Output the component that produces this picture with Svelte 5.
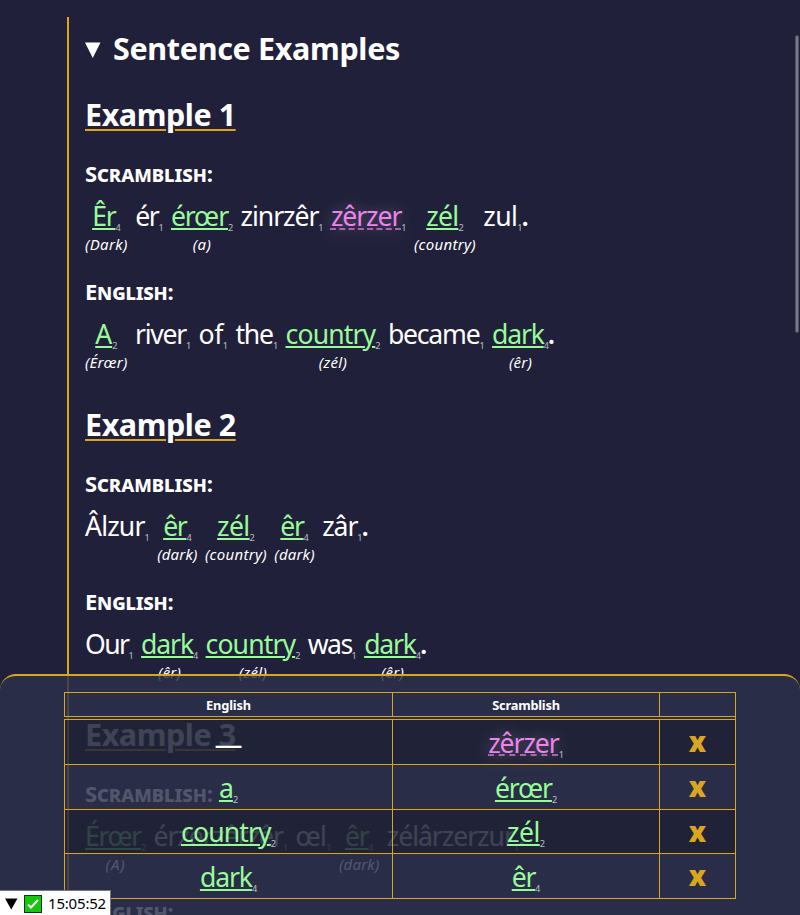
<script>
  // kind: plain | known (green, underlined) | active (pink, dashed)
  const w = (text, width, count, kind = 'plain', note = null, noteWidth = 0) => ({
    text, width, count, kind, note, noteWidth
  });

  const examples = [
    {
      title: 'Example 1',
      lines: [
        {
          label: 'Scramblish:', labelWidth: 128,
          words: [
            w('Êr', 23.3, 4, 'known', '(Dark)', 42.8),
            w('ér', 23.2, 1),
            w('érœr', 57, 2, 'known', '(a)', 18.5),
            w('zinrzêr', 77.8, 1),
            w('zêrzer', 70.4, 1, 'active'),
            w('zél', 32.2, 2, 'known', '(country)', 62),
            w('zul', 34, 1)
          ]
        },
        {
          label: 'English:', labelWidth: 88.5,
          words: [
            w('A', 17, 2, 'known', '(Érœr)', 42.6),
            w('river', 51, 1),
            w('of', 24.3, 1),
            w('the', 37.5, 1),
            w('country', 89.8, 2, 'known', '(zél)', 28.5),
            w('became', 91.6, 1),
            w('dark', 51.6, 4, 'known', '(êr)', 23)
          ]
        }
      ]
    },
    {
      title: 'Example 2',
      lines: [
        {
          label: 'Scramblish:', labelWidth: 128,
          words: [
            w('Âlzur', 59.6, 1),
            w('êr', 23.2, 4, 'known', '(dark)', 40.4),
            w('zél', 32.5, 2, 'known', '(country)', 62),
            w('êr', 23.2, 4, 'known', '(dark)', 40.4),
            w('zâr', 35.2, 1)
          ]
        },
        {
          label: 'English:', labelWidth: 88.5,
          words: [
            w('Our', 43.5, 1),
            w('dark', 51.9, 4, 'known', '(êr)', 23),
            w('country', 89.6, 2, 'known', '(zél)', 28.5),
            w('was', 43.8, 1),
            w('dark', 51.6, 4, 'known', '(êr)', 23)
          ]
        }
      ]
    },
    {
      title: 'Example 3',
      lines: [
        {
          label: 'Scramblish:', labelWidth: 128,
          words: [
            w('Érœr', 56, 2, 'known', '(A)', 20),
            w('érzerzêrzêr', 129.3, 1),
            w('œl', 31, 1),
            w('êr', 23.2, 4, 'known', '(dark)', 40.4),
            w('zélârzerzur', 127, 1)
          ]
        },
        { label: 'English:', labelWidth: 88.5, words: [] }
      ]
    }
  ];

  const glossary = [
    { english: null, scramblish: w('zêrzer', 70.5, 1, 'active') },
    { english: w('a', 14, 2, 'known'), scramblish: w('érœr', 57, 2, 'known') },
    { english: w('country', 89.7, 2, 'known'), scramblish: w('zél', 32.7, 2, 'known') },
    { english: w('dark', 52, 4, 'known'), scramblish: w('êr', 23.4, 4, 'known') }
  ];

  // Tracks the text so that it fills the given width.
  function fit(node, width) {
    node.style.letterSpacing = '0px';
    const natural = node.getBoundingClientRect().width;
    node.style.letterSpacing = `${(width - natural) / [...node.textContent.trim()].length}px`;
  }
</script>

{#snippet word(item)}
  <span class="word"><span class={item.kind} use:fit={item.width}>{item.text}</span><span class="count">{item.count}</span></span>
{/snippet}

<div class="page">
  <main>
    <h2>
      <svg width="16" height="16" viewBox="0 0 16 16"><path d="M0 0.5H15.5L7.75 16Z" fill="#fff" /></svg>
      <span use:fit={287}>Sentence Examples</span>
    </h2>
    {#each examples as example}
      <section>
        <h3><span use:fit={150.7}>{example.title}</span></h3>
        {#each example.lines as line}
          <h4><span use:fit={line.labelWidth}>{line.label}</span></h4>
          <div class="sentence">
            {#each line.words as item}
              <span class="cell">
                {@render word(item)}
                {#if item.note}<em><span use:fit={item.noteWidth}>{item.note}</span></em>{/if}
              </span>
            {/each}
            {#if line.words.length}<span class="stop">.</span>{/if}
          </div>
        {/each}
      </section>
    {/each}
  </main>

  <div class="scrollbar"></div>

  <aside>
    <div class="table">
      <div class="row head">
        <div><span use:fit={45}>English</span></div>
        <div><span use:fit={67.5}>Scramblish</span></div>
        <div></div>
      </div>
      {#each glossary as entry}
        <div class="row">
          <div>
            {#if entry.english}{@render word(entry.english)}{:else}<span class="dash">—</span>{/if}
          </div>
          <div>{@render word(entry.scramblish)}</div>
          <div><button>x</button></div>
        </div>
      {/each}
    </div>
  </aside>

  <div class="status">
    <svg class="arrow" width="13" height="12" viewBox="0 0 13 12"><path d="M0 0.5H12.5L6.25 11.5Z" /></svg>
    <svg class="check" width="18" height="18" viewBox="0 0 18 18">
      <rect x="0.5" y="0.5" width="17" height="17" fill="#16c60c" stroke="#0c3b1c" />
      <path d="M4 9.5L7 12.5L14 5" fill="none" stroke="#fff" stroke-width="2" />
    </svg>
    <span use:fit={58}>15:05:52</span>
  </div>
</div>

<style>
  :global(body) {
    margin: 0;
    overflow: hidden;
    background: #21203a;
  }
  .page {
    position: relative;
    box-sizing: border-box;
    width: 800px;
    height: 915px;
    padding: 17px 0 0 67px;
    overflow: hidden;
    background: #21203a;
    color: #fff;
    font-family: 'Noto Sans', 'Open Sans', sans-serif;
  }
  main {
    height: 960px;
    padding: 9px 0 0 16px;
    border-left: 2px solid #daa520;
  }
  h2, h3, h4 {
    margin: 0;
    white-space: nowrap;
  }
  h2 {
    display: flex;
    align-items: center;
    gap: 12px;
    height: 44px;
    margin-bottom: 24px;
    font-size: 30.5px;
    line-height: 44px;
  }
  h2 svg {
    margin-top: 3px;
  }
  section {
    height: 310px;
  }
  h3 {
    height: 40px;
    margin-bottom: 24px;
    font-size: 30.5px;
    line-height: 40px;
    text-decoration: underline 2px #daa520;
    text-underline-offset: 3px;
  }
  h4 {
    height: 30px;
    margin-bottom: 10px;
    font-size: 22px;
    line-height: 30px;
    font-variant: small-caps;
  }
  .sentence {
    display: flex;
    align-items: flex-start;
    height: 56px;
    margin-bottom: 22px;
  }
  .cell {
    display: flex;
    flex-direction: column;
    align-items: center;
    margin-left: 7.4px;
  }
  .cell:first-child {
    margin-left: 0;
  }
  .word, .stop, .dash {
    font-size: 26.6px;
    line-height: 36px;
    white-space: nowrap;
  }
  .stop {
    margin-left: -1px;
    font-weight: 600;
  }
  .known {
    color: #98fb98;
    text-decoration: underline 2px;
    text-underline-offset: 2px;
  }
  .active {
    color: #ee82ee;
    text-decoration: underline dashed 2px rgba(238, 130, 238, 0.65);
    text-underline-offset: 2px;
    text-shadow: 0 0 16px rgba(255, 255, 255, 0.3);
  }
  .count {
    position: relative;
    top: 5px;
    display: inline-block;
    width: 5.2px;
    color: rgba(255, 255, 255, 0.7);
    font-size: 9.2px;
    line-height: 10px;
  }
  em {
    font-size: 15px;
    line-height: 20px;
    white-space: nowrap;
  }
  .scrollbar {
    position: absolute;
    top: 35px;
    left: 795px;
    box-sizing: border-box;
    width: 4px;
    height: 298px;
    border: 1px solid #504f64;
    border-radius: 2px;
    background: #7a7988;
  }
  aside {
    position: absolute;
    top: 674px;
    left: 0;
    box-sizing: border-box;
    width: 800px;
    height: 260px;
    padding: 16px 64px 0;
    border-top: 2px solid #daa520;
    border-radius: 16px 16px 0 0;
    background: rgba(43, 49, 76, 0.82);
  }
  .table {
    border: solid #daa520;
    border-width: 1px 1px 0 0;
  }
  .row {
    display: grid;
    grid-template-columns: 328px 267px 76px;
    height: 44px;
    border-bottom: 1px solid #daa520;
  }
  .row:nth-child(4) {
    height: 43px;
  }
  .row:nth-child(even) {
    background: rgba(6, 6, 4, 0.23);
    background-clip: padding-box;
  }
  .row > div {
    display: flex;
    align-items: center;
    justify-content: center;
    min-width: 0;
    border-left: 1px solid #daa520;
  }
  .row.head {
    height: 23px;
    border-bottom: 4px double #daa520;
    font-size: 12.8px;
    font-weight: 700;
  }
  .dash {
    padding-top: 1px;
    font-size: 28px;
  }
  .row .word {
    padding-top: 1px;
  }
  button {
    padding: 0;
    border: 0;
    background: none;
    color: #daa520;
    font: 900 27.5px/36px 'Noto Sans', sans-serif;
  }
  .status {
    position: absolute;
    left: 0;
    bottom: 0;
    display: flex;
    align-items: center;
    box-sizing: border-box;
    width: 111px;
    height: 25px;
    padding-left: 5px;
    border: solid #777;
    border-width: 1px 1px 0 0;
    background: #fff;
    color: #000;
    font-size: 15px;
    line-height: 24px;
    white-space: nowrap;
  }
  .arrow {
    margin-top: 2px;
  }
  .check {
    margin: 2px 6px 0 6px;
  }
</style>
